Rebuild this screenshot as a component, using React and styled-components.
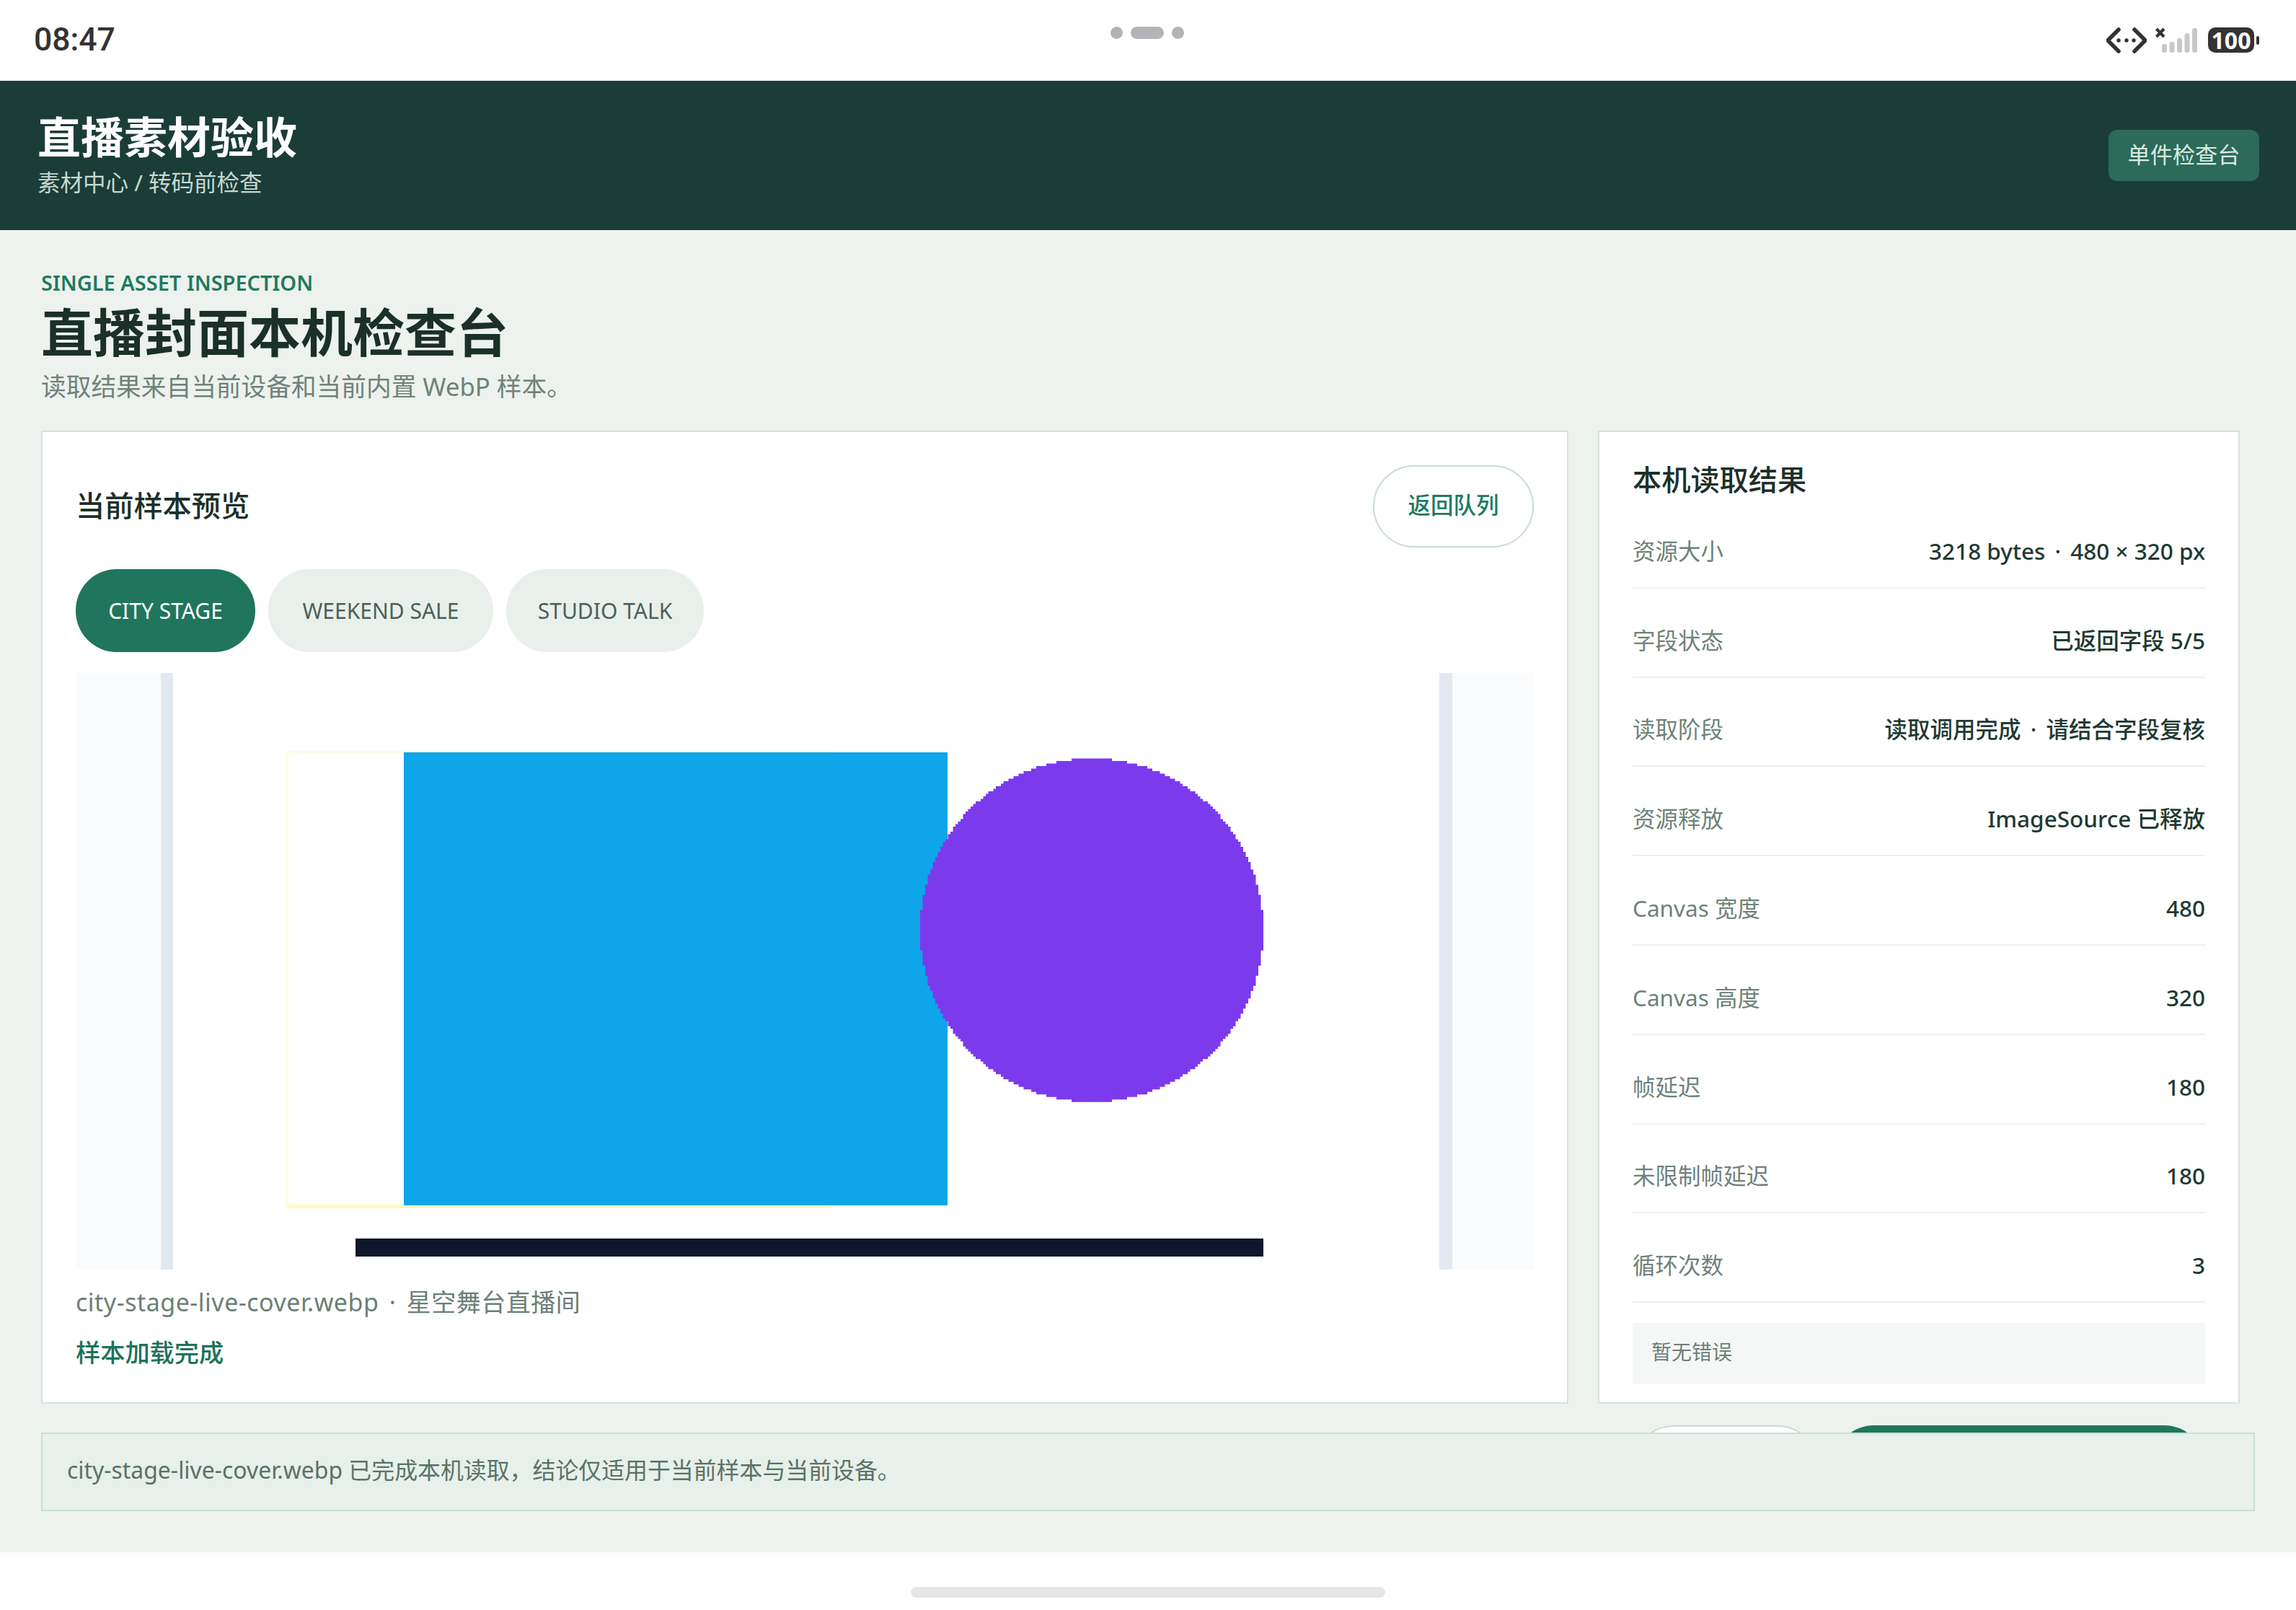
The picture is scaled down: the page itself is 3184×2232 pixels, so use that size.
import React from "react";
import styled, { createGlobalStyle } from "styled-components";

const FONT = `"Noto Sans", "Noto Sans CJK SC", sans-serif`;

const Global = createGlobalStyle`
  html, body { margin: 0; padding: 0; background: #fff; }
  body { width: 3184px; height: 2232px; overflow: hidden; font-family: ${FONT}; }
  * { box-sizing: border-box; }
`;

const Screen = styled.div`
  width: 3184px;
  height: 2232px;
  display: flex;
  flex-direction: column;
  background: #fff;
`;

const StatusBar = styled.div`
  height: 112px;
  flex: none;
  display: grid;
  grid-template-columns: 1fr auto 1fr;
  align-items: start;
  padding: 0 51px 0 47px;
`;
const Clock = styled.div`
  font-family: Roboto, sans-serif;
  font-size: 44.5px;
  line-height: 52px;
  margin-top: 29px;
  font-weight: 500;
  color: #333;
`;
const Dots = styled.div`
  display: flex;
  align-items: center;
  gap: 11px;
  margin-top: 37px;
  margin-left: 2px;
`;
const Dot = styled.span`
  display: block;
  height: 17px;
  width: ${(p) => (p.$wide ? "46px" : "17px")};
  border-radius: 9px;
  background: #b3b4b8;
`;
const StatusIcons = styled.div`
  justify-self: end;
  display: flex;
  align-items: flex-start;
  margin-top: 38px;
`;
const Battery = styled.div`
  width: 64px;
  height: 35px;
  margin-left: 13px;
  border-radius: 10px;
  background: #333;
  color: #fff;
  font-family: "Open Sans", sans-serif;
  font-size: 32px;
  line-height: 35px;
  font-weight: 700;
  text-align: center;
`;
const BatteryNub = styled.span`
  width: 4px;
  height: 12px;
  margin: 12px 0 0 3px;
  border-radius: 2px;
  background: #333;
`;

const Header = styled.header`
  height: 207px;
  flex: none;
  background: #1b3d37;
  display: flex;
  align-items: center;
  justify-content: space-between;
  padding: 0 51px 0 52px;
`;
const Brand = styled.div`
  display: flex;
  flex-direction: column;
  gap: 8px;
  margin-top: -4px;
`;
const BrandTitle = styled.div`
  font-size: 60px;
  line-height: 70px;
  font-weight: 700;
  color: #fff;
`;
const BrandSub = styled.div`
  font-size: 31.5px;
  line-height: 40px;
  color: #c6d8d0;
`;
const HeaderBadge = styled.div`
  width: 209px;
  height: 71px;
  padding-bottom: 6px;
  border-radius: 12px;
  background: #2c6a5a;
  color: #d9eae2;
  font-size: 31.2px;
  display: flex;
  align-items: center;
  justify-content: center;
`;

const Main = styled.main`
  flex: 1;
  min-height: 0;
  background: #edf2ee;
  display: flex;
  flex-direction: column;
  padding: 58px 57px 57px;
`;
const Eyebrow = styled.div`
  font-size: 29px;
  line-height: 30px;
  font-weight: 600;
  color: #1f7a5f;
`;
const PageTitle = styled.h1`
  margin: 4px 0 0;
  font-size: 72px;
  line-height: 98px;
  font-weight: 700;
  color: #1b3028;
`;
const PageSub = styled.p`
  margin: 5px 0 39px;
  font-size: 34.7px;
  line-height: 44px;
  color: #6f8279;
`;

const Viewport = styled.div`
  flex: 1;
  min-height: 0;
  overflow: hidden;
  padding-right: 21px;
`;
const Columns = styled.div`
  display: grid;
  grid-template-columns: minmax(0, 1fr) 890px;
  column-gap: 41px;
  row-gap: 30px;
`;
const Card = styled.section`
  background: #fff;
  border: 2px solid #d6e3dd;
  padding: 46px 46px 25px;
  display: flex;
  flex-direction: column;
`;
const CardHead = styled.div`
  display: flex;
  align-items: center;
  justify-content: space-between;
`;
const CardTitle = styled.h2`
  margin: 0 0 3px;
  font-size: 40.2px;
  line-height: 44px;
  font-weight: 500;
  color: #1b3028;
`;
const SideTitle = styled(CardTitle)`
  margin: -2px 0 5px;
`;
const GhostButton = styled.button`
  width: 223px;
  height: 114px;
  border-radius: 57px;
  background: #fff;
  border: 2px solid #c8dcd4;
  color: #1f7a5f;
  font-family: inherit;
  font-size: 31.5px;
  font-weight: 500;
  padding: 0 0 8px;
`;
const Tabs = styled.div`
  display: flex;
  gap: 18px;
  margin-top: 30px;
`;
const Tab = styled.button`
  height: 115px;
  width: ${(p) => p.$width}px;
  padding: 0;
  border: 0;
  border-radius: 57px;
  font-family: inherit;
  font-size: 30px;
  background: ${(p) => (p.$active ? "#20755d" : "#e9f0ec")};
  color: ${(p) => (p.$active ? "#fff" : "#4a6158")};
`;
const Preview = styled.div`
  margin-top: 29px;
  height: 827px;
  line-height: 0;
`;
const Caption = styled.div`
  margin-top: 23px;
  font-size: 34px;
  line-height: 44px;
  letter-spacing: 0.5px;
  color: #6b7f76;
`;
const LoadState = styled.div`
  margin-top: 28px;
  font-size: 34.2px;
  line-height: 40px;
  font-weight: 500;
  color: #1c7259;
`;
const Sep = styled.span`
  padding: 0 5px;
`;

const Rows = styled.div`
  display: flex;
  flex-direction: column;
`;
const Row = styled.div`
  height: 123.8px;
  display: flex;
  align-items: flex-end;
  justify-content: space-between;
  padding-bottom: 31px;
  border-bottom: 2px solid #edf1ef;
  font-size: 31.5px;
  line-height: 38px;
`;
const RowLabel = styled.span`
  color: #6f8279;
`;
const RowValue = styled.span`
  color: #1f3a32;
  font-weight: 500;
`;
const ErrorNote = styled.div`
  margin-top: 28px;
  height: 85px;
  background: #f5f7f6;
  padding: 0 26px 8px;
  display: flex;
  align-items: center;
  font-size: 28px;
  color: #6b7f76;
`;
const Actions = styled.div`
  grid-column: 2;
  display: flex;
  gap: 20px;
  padding: 0 48px;
`;
const ActionGhost = styled.div`
  width: 258px;
  height: 114px;
  flex: none;
  border-radius: 57px;
  background: #fff;
  border: 2px solid #c8dcd4;
`;
const ActionPrimary = styled.div`
  flex: 1;
  height: 114px;
  border-radius: 57px;
  background: #20755d;
`;
const Toast = styled.div`
  flex: none;
  height: 109px;
  background: #e7f0ea;
  border: 2px solid #c8dfd5;
  padding: 0 34px 10px;
  display: flex;
  align-items: center;
  font-size: 31.9px;
  color: #5a7268;
`;
const HomeArea = styled.div`
  height: 80px;
  flex: none;
  display: flex;
  justify-content: center;
  padding-top: 48px;
`;
const HomeBar = styled.div`
  width: 658px;
  height: 15px;
  border-radius: 8px;
  background: #e6e6e6;
`;

const rows = [
  ["资源大小", ["3218 bytes", "480 × 320 px"]],
  ["字段状态", ["已返回字段 5/5"]],
  ["读取阶段", ["读取调用完成", "请结合字段复核"]],
  ["资源释放", ["ImageSource 已释放"]],
  ["Canvas 宽度", ["480"]],
  ["Canvas 高度", ["320"]],
  ["帧延迟", ["180"]],
  ["未限制帧延迟", ["180"]],
  ["循环次数", ["3"]],
];

const tabs = [
  ["CITY STAGE", 249],
  ["WEEKEND SALE", 312],
  ["STUDIO TALK", 274],
];

const CodeGlyph = () => (
  <svg width="56" height="36" viewBox="0 0 56 36" fill="none">
    <path d="M17 3 2 18l15 15M39 3l15 15-15 15" stroke="#333" strokeWidth="5.5" strokeLinecap="round" strokeLinejoin="round" />
    <circle cx="17" cy="18" r="2.7" fill="#333" />
    <circle cx="28" cy="18" r="2.7" fill="#333" />
    <circle cx="38" cy="18" r="2.7" fill="#333" />
  </svg>
);

const SignalGlyph = () => (
  <svg width="60" height="36" viewBox="0 0 60 36" fill="none" style={{ marginLeft: 12 }}>
    <path d="M1.5 2 12 13M12 2 1.5 13" stroke="#333" strokeWidth="4" />
    <g fill="#c8c8c8">
      <rect x="9" y="23" width="7" height="12" rx="3" />
      <rect x="19.5" y="20" width="7" height="15" rx="3" />
      <rect x="30" y="15" width="7" height="20" rx="3" />
      <rect x="40.5" y="8" width="7" height="27" rx="3" />
      <rect x="51" y="1" width="7" height="34" rx="3" />
    </g>
  </svg>
);

// The sample is a low-resolution bitmap scaled up, so its circle has a stepped edge.
function steppedCircle(cx, cy, r, step) {
  let d = "";
  for (let y = -r; y < r; y += step) {
    const mid = y + step / 2;
    const half = Math.sqrt(Math.max(0, r * r - mid * mid));
    const w = Math.round(half / step) * step;
    d += `M${(cx - w).toFixed(1)} ${(cy + y).toFixed(1)}h${(2 * w).toFixed(1)}v${step + 0.3}h${(-2 * w).toFixed(1)}z`;
  }
  return d;
}

const SampleCover = () => (
  <svg width="2022" height="827" viewBox="0 0 2022 827">
    <rect width="2022" height="827" fill="#fff" />
    <rect x="0" y="0" width="118" height="827" fill="#f9fbfd" />
    <rect x="118" y="0" width="17" height="827" fill="#e2e8f0" />
    <rect x="1891" y="0" width="18" height="827" fill="#e4e8f0" />
    <rect x="1909" y="0" width="113" height="827" fill="#f9fbfd" />
    <rect x="293.5" y="109.5" width="754" height="629" fill="#fff" stroke="#fffde0" strokeWidth="3" />
    <rect x="292" y="737" width="755" height="5" fill="#fffdb8" />
    <rect x="455" y="110" width="754" height="628" fill="#0ea5e9" />
    <path d={steppedCircle(1409, 356.5, 238, 3.5)} fill="#7c3aed" />
    <rect x="388" y="784" width="1259" height="25" fill="#0f172a" />
  </svg>
);

const Joined = ({ parts }) =>
  parts.map((part, i) => (
    <React.Fragment key={part}>
      {i > 0 && <Sep> · </Sep>}
      {part}
    </React.Fragment>
  ));

export default function App() {
  return (
    <Screen>
      <Global />
      <StatusBar>
        <Clock>08:47</Clock>
        <Dots>
          <Dot />
          <Dot $wide />
          <Dot />
        </Dots>
        <StatusIcons>
          <CodeGlyph />
          <SignalGlyph />
          <Battery>100</Battery>
          <BatteryNub />
        </StatusIcons>
      </StatusBar>
      <Header>
        <Brand>
          <BrandTitle>直播素材验收</BrandTitle>
          <BrandSub>素材中心 / 转码前检查</BrandSub>
        </Brand>
        <HeaderBadge>单件检查台</HeaderBadge>
      </Header>
      <Main>
        <Eyebrow>SINGLE ASSET INSPECTION</Eyebrow>
        <PageTitle>直播封面本机检查台</PageTitle>
        <PageSub>读取结果来自当前设备和当前内置 WebP 样本。</PageSub>
        <Viewport>
          <Columns>
            <Card>
              <CardHead>
                <CardTitle>当前样本预览</CardTitle>
                <GhostButton>返回队列</GhostButton>
              </CardHead>
              <Tabs>
                {tabs.map(([label, width], i) => (
                  <Tab key={label} $width={width} $active={i === 0}>
                    {label}
                  </Tab>
                ))}
              </Tabs>
              <Preview>
                <SampleCover />
              </Preview>
              <Caption>
                <Joined parts={["city-stage-live-cover.webp", "星空舞台直播间"]} />
              </Caption>
              <LoadState>样本加载完成</LoadState>
            </Card>
            <Card>
              <SideTitle>本机读取结果</SideTitle>
              <Rows>
                {rows.map(([label, value]) => (
                  <Row key={label}>
                    <RowLabel>{label}</RowLabel>
                    <RowValue>
                      <Joined parts={value} />
                    </RowValue>
                  </Row>
                ))}
              </Rows>
              <ErrorNote>暂无错误</ErrorNote>
            </Card>
            <Actions>
              <ActionGhost />
              <ActionPrimary />
            </Actions>
          </Columns>
        </Viewport>
        <Toast>city-stage-live-cover.webp 已完成本机读取，结论仅适用于当前样本与当前设备。</Toast>
      </Main>
      <HomeArea>
        <HomeBar />
      </HomeArea>
    </Screen>
  );
}
